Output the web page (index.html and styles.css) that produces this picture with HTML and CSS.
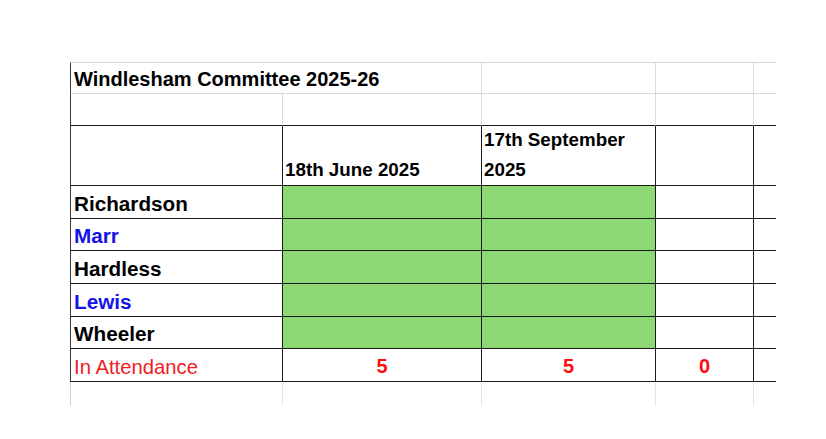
FILE: index.html
```html
<!DOCTYPE html>
<html lang="en">
<head>
<meta charset="utf-8">
<title>Windlesham Committee 2025-26</title>
<link rel="stylesheet" href="styles.css">
</head>
<body>
<div class="sheet">
  <!-- row 1 -->
  <div class="c top light first span2 title">Windlesham Committee 2025-26</div>
  <div class="c top light"></div>
  <div class="c top light"></div>
  <div class="c top light last"></div>
  <!-- row 2 -->
  <div class="c light darkbottom first"></div>
  <div class="c light darkbottom"></div>
  <div class="c light darkbottom"></div>
  <div class="c light darkbottom"></div>
  <div class="c light darkbottom last"></div>
  <!-- row 3 -->
  <div class="c dark first"></div>
  <div class="c dark head">18th June 2025</div>
  <div class="c dark head">17th September 2025</div>
  <div class="c dark"></div>
  <div class="c dark last"></div>
  <!-- members -->
  <div class="c dark first name">Richardson</div>
  <div class="c dark fill"></div>
  <div class="c dark fill"></div>
  <div class="c dark"></div>
  <div class="c dark last"></div>

  <div class="c dark first name blue">Marr</div>
  <div class="c dark fill"></div>
  <div class="c dark fill"></div>
  <div class="c dark"></div>
  <div class="c dark last"></div>

  <div class="c dark first name">Hardless</div>
  <div class="c dark fill"></div>
  <div class="c dark fill"></div>
  <div class="c dark"></div>
  <div class="c dark last"></div>

  <div class="c dark first name blue">Lewis</div>
  <div class="c dark fill"></div>
  <div class="c dark fill"></div>
  <div class="c dark"></div>
  <div class="c dark last"></div>

  <div class="c dark first name">Wheeler</div>
  <div class="c dark fill"></div>
  <div class="c dark fill"></div>
  <div class="c dark"></div>
  <div class="c dark last"></div>
  <!-- attendance -->
  <div class="c dark first attend">In Attendance</div>
  <div class="c dark num">5</div>
  <div class="c dark num">5</div>
  <div class="c dark num">0</div>
  <div class="c dark last"></div>
  <!-- trailing row -->
  <div class="c fade first"></div>
  <div class="c fade"></div>
  <div class="c fade"></div>
  <div class="c fade"></div>
  <div class="c fade last"></div>
</div>
</body>
</html>
```
FILE: styles.css
```css
html, body {
  margin: 0;
  padding: 0;
  background: #ffffff;
}

body {
  font-family: "Liberation Sans", Arial, sans-serif;
  color: #000000;
}

.sheet {
  margin: 62px 0 0 70px;
  width: 706px;
  display: grid;
  grid-template-columns: 213px 199px 174px 98px 22px;
  grid-template-rows: 32px 32px 60px 33px 32px 33px 33px 32px 33px 24px;
}

.c {
  box-sizing: border-box;
  display: flex;
  align-items: flex-end;
  padding: 0 3px;
  border-right: 1px solid #d6d6d6;
  border-bottom: 1px solid #d6d6d6;
  overflow: visible;
  white-space: nowrap;
}

.top {
  border-top: 1px solid #d6d6d6;
}

.light {
  border-right-color: #dadada;
  border-bottom-color: #dadada;
}

.light.darkbottom {
  border-bottom-color: #1a1a1a;
}

.dark {
  border-right-color: #1a1a1a;
  border-bottom-color: #1a1a1a;
}

.first {
  border-left: 1px solid #3a3a3a;
}

.last {
  border-right: none;
}

.span2 {
  grid-column: span 2;
}

.fade {
  border-bottom: none;
  border-right-color: #e6e6e6;
}

.fade.first {
  border-left-color: #cfcfcf;
}

.title {
  font-size: 20px;
  font-weight: 700;
  line-height: 24px;
  padding-bottom: 2px;
}

.head {
  white-space: normal;
  font-size: 18.8px;
  font-weight: 700;
  line-height: 30px;
  padding-left: 2px;
}

.name {
  font-size: 20.7px;
  font-weight: 700;
  line-height: 24px;
  padding-bottom: 2px;
}

.blue {
  color: #1414e6;
}

.fill {
  background: #8ed873;
}

.attend {
  font-size: 20.3px;
  font-weight: 400;
  line-height: 24px;
  padding-bottom: 2px;
  color: #ee1c24;
}

.num {
  justify-content: center;
  font-size: 20px;
  font-weight: 700;
  line-height: 24px;
  padding-bottom: 3px;
  color: #ff0d0d;
}
```
